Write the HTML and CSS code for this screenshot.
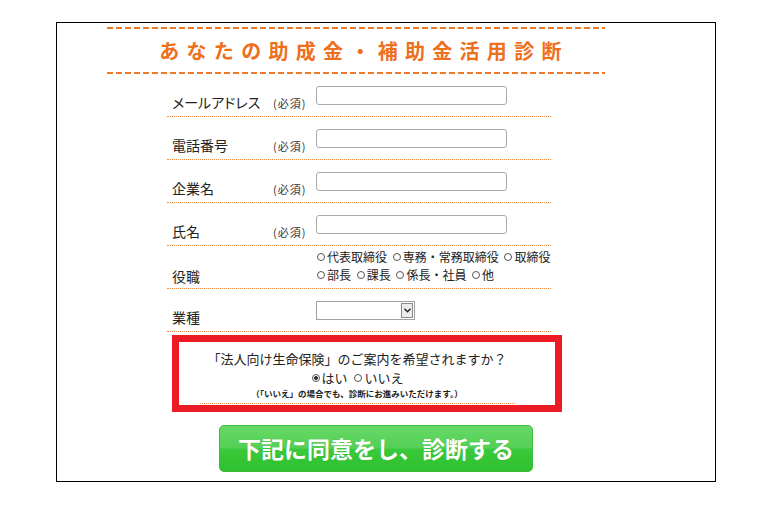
FILE: index.html
```html
<!DOCTYPE html>
<html lang="ja">
<head>
    <meta charset="UTF-8">
    <title>あなたの助成金・補助金活用診断</title>
    <link rel="stylesheet" href="styles.css">
</head>
<body>
<div class="wrap">
    <div class="title">
        <h1>あなたの助成金・補助金活用診断</h1>
    </div>
    <div class="form">
        <div class="row">
            <p class="label">メールアドレス</p>
            <p class="must">(必須)</p>
            <div class="field"><span class="input"></span></div>
        </div>
        <div class="row">
            <p class="label">電話番号</p>
            <p class="must">(必須)</p>
            <div class="field"><span class="input"></span></div>
        </div>
        <div class="row">
            <p class="label">企業名</p>
            <p class="must">(必須)</p>
            <div class="field"><span class="input"></span></div>
        </div>
        <div class="row">
            <p class="label">氏名</p>
            <p class="must">(必須)</p>
            <div class="field"><span class="input"></span></div>
        </div>
        <div class="row">
            <p class="label">役職</p>
            <p class="must"></p>
            <div class="field opts">
                <p><i class="radio"></i>代表取締役 <i class="radio"></i>専務・常務取締役 <i class="radio"></i>取締役</p>
                <p><i class="radio"></i>部長 <i class="radio"></i>課長 <i class="radio"></i>係長・社員 <i class="radio"></i>他</p>
            </div>
        </div>
        <div class="row">
            <p class="label">業種</p>
            <p class="must"></p>
            <div class="field">
                <span class="select"><span class="arrow"><svg width="7" height="5" viewBox="0 0 7 5"><path d="M0.5 0.8 L3.5 3.8 L6.5 0.8" fill="none" stroke="#222" stroke-width="1.4"/></svg></span></span>
            </div>
        </div>
        <div class="ask">
            <p class="q">「法人向け生命保険」のご案内を希望されますか？</p>
            <p class="a"><i class="radio on"></i>はい&nbsp; <i class="radio"></i>いいえ</p>
            <p class="note">（「いいえ」の場合でも、診断にお進みいただけます。）</p>
            <div class="line"></div>
        </div>
        <a class="btn" href="#">下記に同意をし、診断する</a>
    </div>
</div>
</body>
</html>
```

FILE: styles.css
```css
body,p,h1{ margin: 0; padding: 0;}
a{ text-decoration: none; color: inherit;}
body{
    font-family: "Noto Sans CJK JP", "Noto Sans", sans-serif;
    color: #222;
    background: #fff;
}
.wrap{
    width: 658px;
    height: 458px;
    margin: 22px 0 0 56px;
    border: 1px solid #000;
}
.title{
    width: 498px;
    margin: 4px 0 0 50px;
}
.title:before,.title:after{
    content: "";
    display: block;
    height: 2px;
    background: repeating-linear-gradient(90deg, #ef7a2a 0, #ef7a2a 6px, transparent 6px, transparent 9px);
}
.title h1{
    height: 43px;
    line-height: 43px;
    padding-left: 16px;
    text-align: center;
    font-size: 20px;
    font-weight: bold;
    letter-spacing: 7.3px;
    color: #ee6f1c;
}
.form{
    width: 384px;
    margin-left: 110px;
}
.row{
    display: grid;
    grid-template-columns: 101px 43px 1fr;
    align-items: end;
    height: 36px;
    padding: 0 0 6px 5px;
    border-bottom: 1px dotted #f08a40;
}
.label{
    font-size: 14px;
    line-height: 16px;
    white-space: nowrap;
    font-feature-settings: "palt";
}
.must{
    font-size: 11px;
    line-height: 14px;
    letter-spacing: 1px;
    color: #333;
}
.field{
    align-self: start;
    padding-top: 12px;
}
.input{
    display: block;
    width: 189px;
    height: 17px;
    border: 1px solid #a9a9a9;
    border-radius: 3px;
    background: #fff;
}
.select{
    display: flex;
    justify-content: flex-end;
    width: 97px;
    height: 17px;
    border: 1px solid #a0a0a0;
    background: #fff;
}
.select .arrow{
    display: flex;
    align-items: center;
    justify-content: center;
    width: 10px;
    height: 13px;
    margin: 1px;
    border: 1px solid #8a8a8a;
    background: #ececec;
}
.opts{
    padding-top: 2px;
}
.opts p{
    font-size: 12px;
    line-height: 18px;
    white-space: nowrap;
    word-spacing: 2px;
}
.radio{
    display: inline-block;
    width: 6px;
    height: 6px;
    margin: 0 2px 0 1px;
    border: 1px solid #555;
    border-radius: 50%;
    vertical-align: 1px;
}
.radio.on{
    background: radial-gradient(circle, #333 0, #333 1.6px, #fff 2.2px);
}
.ask{
    width: 356px;
    margin: 3px 0 0 5px;
    padding: 9px 20px 1px 0;
    border: 7px solid #ec1c24;
    text-align: center;
}
.ask .q{
    font-size: 13px;
    line-height: 16px;
}
.ask .a{
    margin-top: 3px;
    font-size: 13px;
    line-height: 16px;
}
.ask .note{
    margin-top: 1px;
    font-size: 8.5px;
    line-height: 12px;
    font-weight: bold;
}
.ask .line{
    width: 315px;
    margin: 4px auto 0;
    border-top: 1px dotted #f08a40;
}
.btn{
    display: block;
    width: 312px;
    height: 45px;
    margin: 13px 0 0 52px;
    border: 1px solid #3cbc3c;
    border-radius: 5px;
    background: linear-gradient(#66d866 0, #55d055 48%, #3ac93a 52%, #2ec12e 100%);
    text-align: center;
    line-height: 45px;
    font-size: 23px;
    font-weight: bold;
    color: #fff;
    text-shadow: 0 0 1px rgba(0,0,0,.15);
}
```
